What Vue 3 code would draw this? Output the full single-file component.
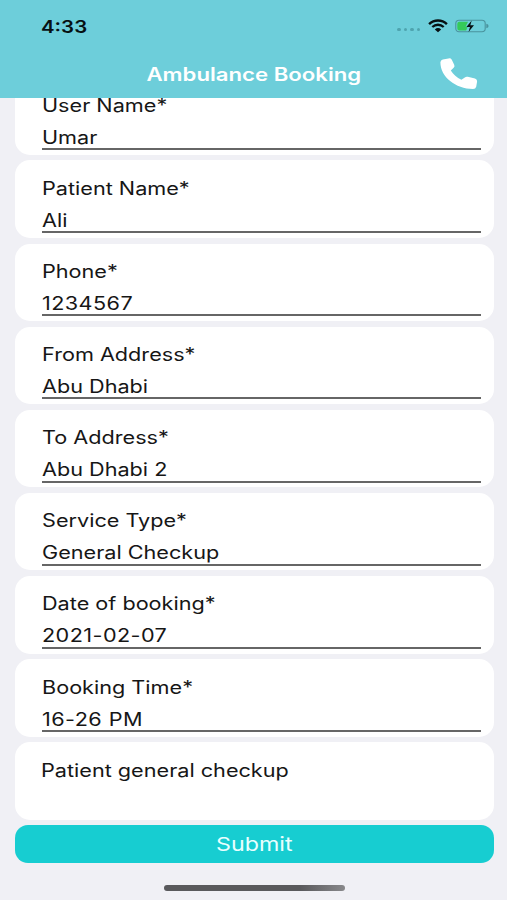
<script setup>
const fields = [
  { label: 'User Name*', value: 'Umar' },
  { label: 'Patient Name*', value: 'Ali' },
  { label: 'Phone*', value: '1234567', numeric: true },
  { label: 'From Address*', value: 'Abu Dhabi' },
  { label: 'To Address*', value: 'Abu Dhabi 2' },
  { label: 'Service Type*', value: 'General Checkup' },
  { label: 'Date of booking*', value: '2021-02-07', numeric: true },
  { label: 'Booking Time*', value: '16-26 PM', numeric: true },
]
</script>

<template>
  <div class="screen">
    <header class="header">
      <div class="status">
        <span class="clock wide">4:33</span>
        <div class="indicators">
          <span class="dots"><i v-for="n in 4" :key="n"></i></span>
          <svg class="wifi" width="20" height="14" viewBox="0 0 20 14" fill="none" stroke="#071012">
            <path d="M1.1 5.1C6.2.3 13.8.3 18.9 5.1" stroke-width="2.5" />
            <path d="M4.3 8C7.6 5 12.4 5 15.7 8" stroke-width="2.3" />
            <path d="M6.8 10.4Q10 7.6 13.2 10.4L10 13.2Z" fill="#071012" stroke="none" />
          </svg>
          <svg class="battery" width="34" height="14" viewBox="0 0 34 14">
            <rect x=".8" y="1.2" width="29.4" height="11.6" rx="3.2" fill="none" stroke="#4a939d" stroke-width="1.1" />
            <path d="M4.3 2.7H13l-2.4 5h2l-1.4 3.8H4.3Q2.3 11.5 2.3 9.5V4.7Q2.3 2.7 4.3 2.7Z" fill="#35ca59" />
            <path d="M31.3 4.8Q33.6 5.2 33.6 7T31.3 9.2Z" fill="#4a939d" />
            <path d="M16.7 1.4 11.4 7.9H15l-1.5 5.2L19 6.3h-3.7Z" fill="#071012" />
          </svg>
        </div>
      </div>
      <div class="titlebar">
        <h1 class="title wide">Ambulance Booking</h1>
        <svg class="phone" width="38" height="32" viewBox="0 0 38 32">
          <path d="M.4 4.2Q.6 2.2 2.8 1.6L8.5.4Q10.8 0 11.8 1.8L14.3 7Q15 8.9 13.4 10.1L10.8 12.5C13.2 16.5 16.8 19.6 21.4 21.7L24.8 19.4Q26 18.4 27.8 18.8L35 20.4Q37.4 21.2 37.1 23.4L36.2 28.8Q35.6 31 33 31C15.7 30.6.4 19 .4 4.2Z" fill="#fff" />
        </svg>
      </div>
    </header>
    <main class="content">
      <section v-for="field in fields" :key="field.label" class="card">
        <div class="label"><span class="wide">{{ field.label }}</span></div>
        <div class="value" :class="{ numeric: field.numeric }"><span class="wide">{{ field.value }}</span></div>
      </section>
      <section class="card note"><span class="wide">Patient general checkup</span></section>
      <button class="submit"><span class="wide">Submit</span></button>
    </main>
    <footer class="home"><i></i></footer>
  </div>
</template>

<style>
body { margin: 0; }
</style>

<style scoped>
.screen {
  display: flex;
  flex-direction: column;
  width: 507px;
  height: 900px;
  overflow: hidden;
  background: #f0f0f5;
  color: #161616;
  font-family: Inter, "Liberation Sans", sans-serif;
  font-size: 18px;
}
.wide {
  display: inline-block;
  transform: scaleX(1.202);
  transform-origin: left center;
  white-space: nowrap;
}
.header { flex: 0 0 98.4px; background: #6dceda; position: relative; z-index: 1; }
.status {
  display: flex;
  justify-content: space-between;
  height: 52px;
  padding: 0 18px 0 41.3px;
  align-items: center;
}
.clock { padding-top: 1px; color: #071012; font-size: 17px; font-weight: 600; }
.indicators { display: flex; align-items: center; }
.dots { display: flex; gap: 3px; padding: 7px 8px 0 0; }
.dots i { width: 3.5px; height: 3.5px; border-radius: 50%; background: #4fa4af; }
.wifi { margin-right: 7px; }
.titlebar {
  display: grid;
  grid-template-columns: 1fr auto 1fr;
  align-items: center;
  height: 44px;
}
.title {
  grid-column: 2;
  margin: 0;
  color: #fff;
  font-size: 18px;
  font-weight: 600;
  transform: translateX(.7px) scaleX(1.232);
  transform-origin: center;
}
.phone { justify-self: end; margin-right: 29px; }
.content {
  flex: none;
  display: flex;
  flex-direction: column;
  gap: 5.5px;
  margin-top: -21px;
  padding: 0 13px 0 15px;
}
.card {
  box-sizing: border-box;
  height: 77.6px;
  padding: 16.5px 13px 0 27px;
  border-radius: 15px;
  background: #fff;
}
.label { height: 24px; padding-left: .1px; line-height: 24px; }
.value {
  height: 30.3px;
  padding-left: .2px;
  line-height: 39.4px;
  border-bottom: 2px solid #666;
}
.numeric { letter-spacing: .35px; }
.note { padding-left: 26.1px; line-height: 24px; }
.submit {
  height: 37.4px;
  padding: 1.6px 0 0;
  border: 0;
  border-radius: 13px;
  background: #17cdd1;
  color: #e9ffff;
  font: inherit;
  font-size: 19px;
}
.submit .wide { transform: scaleX(1.225); transform-origin: center; }
.home { display: flex; justify-content: center; padding: 22.7px 0 0 1px; }
.home i {
  width: 181px;
  height: 6px;
  border-radius: 3px;
  background: linear-gradient(to right, #59595c, #59595c 75%, #88888b);
}
</style>
